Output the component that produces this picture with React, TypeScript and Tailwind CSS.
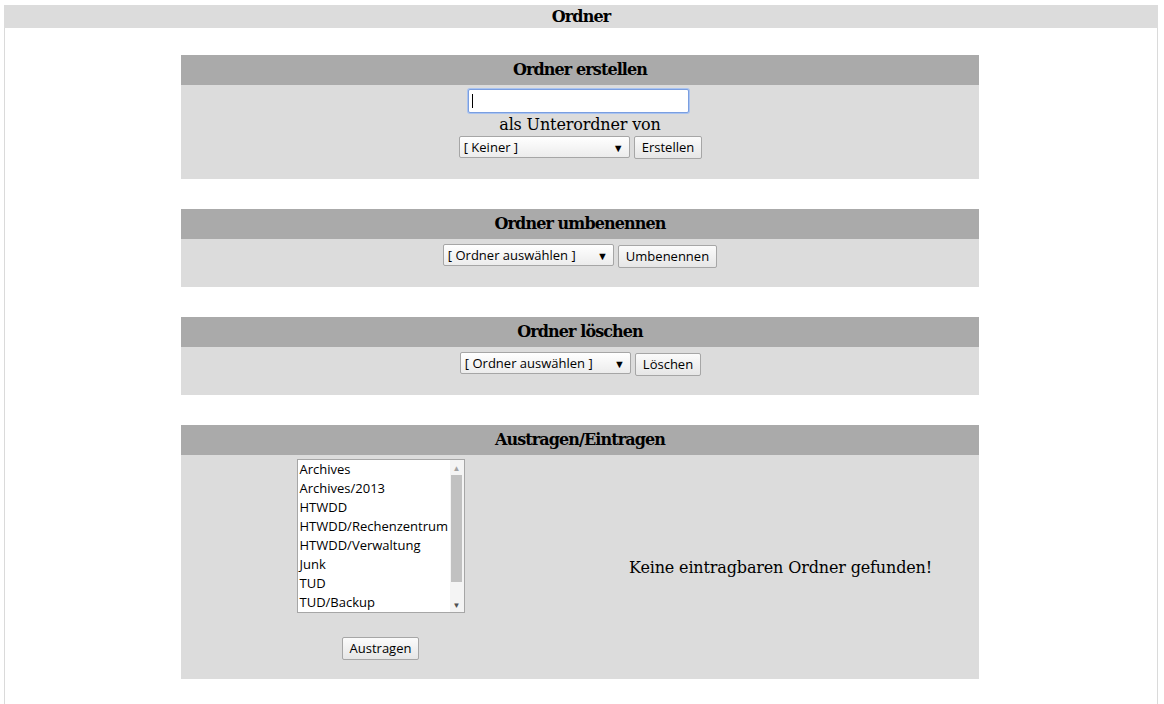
const serif = { fontFamily: '"DejaVu Serif", "Liberation Serif", serif' };

const ctl = 'font-["Open_Sans",_"Noto_Sans",_sans-serif] text-[13px] text-black';

function Select({ label, width }: { label: string; width: number }) {
  return (
    <div
      className={`${ctl} flex h-[22px] items-center justify-between rounded-[2px] border border-[#a6a6a6] bg-gradient-to-b from-white to-[#ececec] pl-[4px] pr-[5px]`}
      style={{ width }}
    >
      <span className="leading-none">{label}</span>
      <span className="text-[11px] leading-none">▼</span>
    </div>
  );
}

function Btn({ children }: { children: React.ReactNode }) {
  return (
    <button
      className={`${ctl} h-[23px] rounded-[2px] border border-[#a6a6a6] bg-gradient-to-b from-[#fbfbfb] to-[#e6e6e6] px-[7px] leading-none`}
    >
      {children}
    </button>
  );
}

function Section({ title, children }: { title: string; children: React.ReactNode }) {
  return (
    <div className="mt-[30px] first:mt-[27px]">
      <div
        className="flex h-[30px] items-center justify-center bg-[#aaaaaa] text-[16px] font-bold tracking-[-0.9px] text-black"
        style={serif}
      >
        {title}
      </div>
      <div className="bg-[#dcdcdc]">{children}</div>
    </div>
  );
}

const folders = [
  'Archives',
  'Archives/2013',
  'HTWDD',
  'HTWDD/Rechenzentrum',
  'HTWDD/Verwaltung',
  'Junk',
  'TUD',
  'TUD/Backup',
];

function ListBox() {
  return (
    <div className="flex h-[154px] w-[168px] border border-[#a6a6a6] bg-white">
      <div className={`${ctl} flex-1 overflow-hidden pl-[2px]`}>
        {folders.map((f) => (
          <div key={f} className="h-[19px] whitespace-nowrap leading-[19px]">
            {f}
          </div>
        ))}
      </div>
      <div className="flex w-[14px] flex-col items-center bg-[#f4f4f4]">
        <div className="flex h-[15px] items-center text-[8px] leading-none text-[#a3a3a3]">▲</div>
        <div className="h-[107px] w-[11px] bg-[#c1c1c1]" />
        <div className="flex-1" />
        <div className="flex h-[15px] items-center text-[8px] leading-none text-[#505050]">▼</div>
      </div>
    </div>
  );
}

export default function App() {
  return (
    <div className="h-[704px] w-[1164px] overflow-hidden bg-white pt-[5px] pl-[4px]">
      <div className="flex h-[699px] w-[1154px] flex-col border-x border-[#dadada]">
        <div
          className="-mx-px flex h-[23px] items-center justify-center bg-[#dcdcdc] text-[16px] font-bold tracking-[-0.9px] text-black"
          style={serif}
        >
          Ordner
        </div>
        <div className="ml-[176px] w-[798px]">
          <Section title="Ordner erstellen">
            <div className="flex flex-col items-center pt-[4px] pb-[21px]">
              <div className="mr-[3px] h-[24px] w-[221px] rounded-[2px] border border-[#7a9ee0] bg-white pl-[3px] pt-[4px] shadow-[0_0_0_1px_#a9c3f0]">
                <div className="h-[14px] w-px bg-black" />
              </div>
              <div
                className="mt-[1px] text-[16px] leading-[22px] tracking-[-0.15px] text-black"
                style={serif}
              >
                als Unterordner von
              </div>
              <div className="flex h-[22px] items-center gap-[4px] pl-[1px]">
                <Select label="[ Keiner ]" width={171} />
                <Btn>Erstellen</Btn>
              </div>
            </div>
          </Section>
          <Section title="Ordner umbenennen">
            <div className="flex h-[48px] items-start justify-center gap-[4px] pt-[5px]">
              <Select label="[ Ordner auswählen ]" width={171} />
              <div className="-mt-px">
                <Btn>Umbenennen</Btn>
              </div>
            </div>
          </Section>
          <Section title="Ordner löschen">
            <div className="flex h-[48px] items-start justify-center gap-[4px] pt-[5px] pl-[1px]">
              <Select label="[ Ordner auswählen ]" width={171} />
              <div className="-mt-px">
                <Btn>Löschen</Btn>
              </div>
            </div>
          </Section>
          <Section title="Austragen/Eintragen">
            <div className="grid h-[224px] grid-cols-2 pt-[4px]">
              <div className="flex flex-col items-center">
                <ListBox />
                <div className="mt-[22px]">
                  <Btn>Austragen</Btn>
                </div>
              </div>
              <div
                className="flex items-center justify-center pb-[3px] pl-[2px] text-[16px] tracking-[-0.15px] text-black"
                style={serif}
              >
                Keine eintragbaren Ordner gefunden!
              </div>
            </div>
          </Section>
        </div>
      </div>
    </div>
  );
}
